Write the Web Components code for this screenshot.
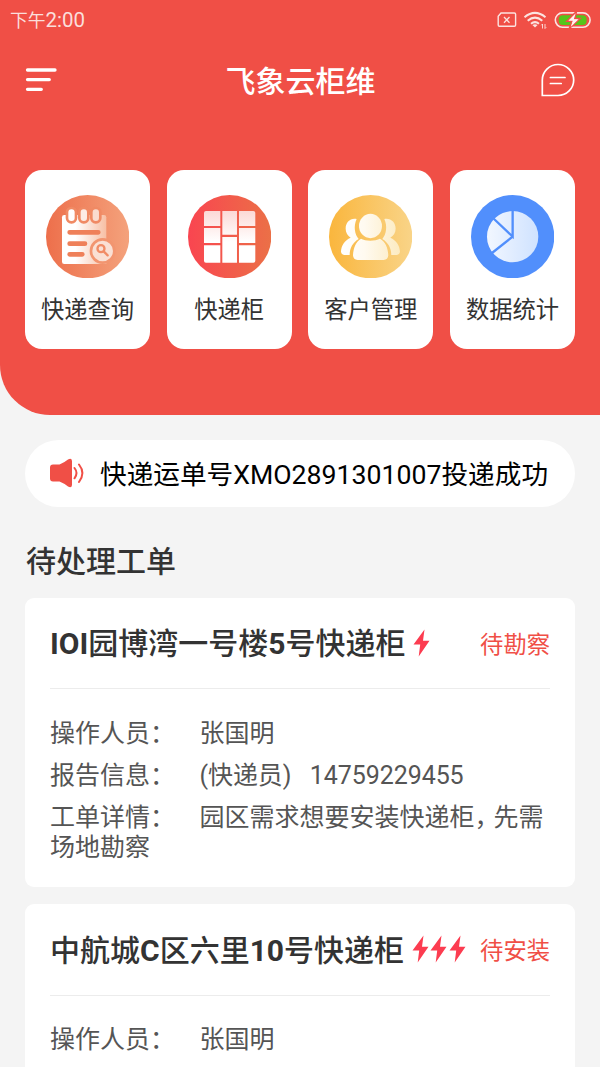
<!DOCTYPE html>
<html lang="zh-CN">
<head>
<meta charset="utf-8">
<title>飞象云柜维</title>
<style>
html,body{margin:0;height:1067px;overflow:hidden;background:#f4f4f4}
body{font-family:Roboto,"Noto Sans CJK SC",sans-serif;color:#333}
</style>
</head>
<body>
<locker-app></locker-app>
<script>
const define=(name,html)=>{
  const t=document.createElement('template');t.innerHTML=html;
  customElements.define(name,class extends HTMLElement{
    constructor(){super();this.attachShadow({mode:'open'}).append(t.content.cloneNode(true));}
  });
};

define('status-bar',`
<style>
:host{display:flex;height:40px;padding:0 9px 0 10px;justify-content:space-between;align-items:center;color:#fbdedb;box-sizing:border-box}
.t{font-size:20.500px;line-height:40px;padding-top:1px;white-space:nowrap}.t span{font-size:17.800px}
svg{display:block}
</style>
<div class="t"><span>下午</span>2:00</div>
<svg width="95" height="20" viewBox="0 0 95 20" fill="none" stroke="#fbe3e0" stroke-width="1.4">
<path d="M5 3H18.3Q19.6 3 19.6 4.300V15Q19.600 16.300 18.300 16.300H3.400Q2.200 16.300 2.200 15V6.300Z"/>
<path d="M8 7L13.500 12.700M13.500 7L8 12.700" stroke-width="1.300"/>
<g stroke-width="2"><path d="M28.500 7.200Q39 -1.400 49.500 7.200M31.700 10.700Q39 4.500 46.300 10.700M35 13.800Q39 10.500 43 13.800"/></g>
<path d="M36.400 15L39 17.600L41.600 15Q39 13.300 36.400 15Z" fill="#fbe3e0" stroke="none"/>
<path d="M46.500 18.500V14L45.300 15.300M49 14V18.500L50.200 17.300" stroke-width=".9"/>
<rect x="59.300" y="2.900" width="34.800" height="14.300" rx="7.150" stroke-width="1.600"/>
<rect x="62.800" y="5.200" width="27.800" height="9.800" rx="4" fill="#56c51b" stroke="none"/>
<path d="M80.200 2L71.200 11.200H76L73.500 18.200L83.800 8.700H78.600Z" fill="#fff2f0" stroke="#f04f46" stroke-width="1.800"/>
<path d="M79.700 3.200L72.300 10.700H76.800L74.700 17L82.600 9.200H77.800Z" fill="#fff2f0" stroke="none"/>
</svg>`);

define('nav-bar',`
<style>
:host{display:grid;grid-template-columns:100px 1fr 100px;align-items:center;height:80px;padding:0 25px;box-sizing:border-box}
h1{margin:0;padding:3px 0 0 1px;text-align:center;color:#fff;font-size:30px;font-weight:500;line-height:40px}
svg{display:block}.r{justify-self:end}
</style>
<svg width="33" height="26" viewBox="0 0 33 26" stroke="#fff" stroke-width="3.300" stroke-linecap="round"><path d="M2.500 3H30M2.500 12.600H24.300M2.500 22.300H16.300"/></svg>
<h1>飞象云柜维</h1>
<svg class="r" width="34" height="34" viewBox="0 0 34 34" fill="none" stroke="#fff" stroke-width="1.700" stroke-linecap="round"><path d="M17 32.500H1.300V17A15.700 15.500 0 1 1 17 32.500Z"/><path d="M9.400 14.500H24M9.400 20.500H20.200"/></svg>`);

define('menu-tile',`
<style>
:host{display:flex;flex-direction:column;align-items:center;height:178.500px;padding-top:25px;background:#fff;border-radius:17px;box-sizing:border-box}
::slotted(svg){display:block;width:83.300px;height:83.300px}
span{margin-top:14.700px;font-size:23.300px;line-height:34px;color:#333;white-space:nowrap}
</style>
<slot name="icon"></slot><span><slot></slot></span>`);

define('menu-grid',`
<style>
:host{display:grid;grid-template-columns:repeat(4,1fr);gap:16.670px;padding:50px 25px 0}
</style>
<menu-tile><svg slot="icon" viewBox="0 0 250 250">
<defs><linearGradient id="a"><stop stop-color="#ed6f4b"/><stop offset="1" stop-color="#f4a27c"/></linearGradient><linearGradient id="b"><stop stop-color="#fff"/><stop offset=".3" stop-color="#fff"/><stop offset="1" stop-color="#f7bfa4"/></linearGradient></defs>
<circle cx="125" cy="125" r="125" fill="url(#a)"/>
<path d="M55 60H174Q181 60 181 67V207H55Q48 207 48 200V67Q48 60 55 60Z" fill="url(#b)"/>
<g stroke="#f08a64" stroke-width="8"><rect x="63" y="39" width="27" height="43" rx="13" fill="#fff"/><rect x="100" y="39" width="27" height="43" rx="13" fill="#fdece5"/><rect x="136" y="39" width="27" height="43" rx="13" fill="#fadccf"/></g>
<path d="M71 112H157M71 146H117M71 178H109" stroke="#ef8059" stroke-width="14" stroke-linecap="round"/>
<circle cx="170" cy="168" r="35" fill="#fae0d4" stroke="#f29570" stroke-width="8"/>
<g fill="none" stroke="#f18c66" stroke-width="7" stroke-linecap="round"><circle cx="165" cy="161" r="10.500"/><path d="M173 169L185 181"/></g>
</svg>快递查询</menu-tile>
<menu-tile><svg slot="icon" viewBox="0 0 250 250">
<defs><linearGradient id="c"><stop stop-color="#f94550"/><stop offset="1" stop-color="#eb7047"/></linearGradient><linearGradient id="d" gradientUnits="userSpaceOnUse" x1="0" y1="48" x2="0" y2="203"><stop stop-color="#fcd9d6"/><stop offset=".6" stop-color="#fff"/></linearGradient></defs>
<circle cx="125" cy="125" r="125" fill="url(#c)"/>
<g fill="url(#d)"><path d="M54 48H97V93H48V54Q48 48 54 48ZM103 48H147V119H103ZM153 48H196Q202 48 202 54V93H153ZM48 99H97V144H48ZM153 99H202V144H153ZM48 151H97V203H54Q48 203 48 197ZM103 126H147V203H103ZM153 151H202V197Q202 203 196 203H153Z"/></g>
</svg>快递柜</menu-tile>
<menu-tile><svg slot="icon" viewBox="0 0 250 250">
<defs><linearGradient id="e"><stop stop-color="#fab63d"/><stop offset="1" stop-color="#f9d488"/></linearGradient><linearGradient id="f" gradientUnits="userSpaceOnUse" x1="36" y1="0" x2="213" y2="0"><stop stop-color="#fff"/><stop offset=".4" stop-color="#fffaf0"/><stop offset="1" stop-color="#fcebc1"/></linearGradient></defs>
<circle cx="125" cy="125" r="125" fill="url(#e)"/>
<g fill="url(#f)"><path d="M83 72C64 68 50 82 50 101C50 113 56 122 65 128C47 136 36 152 36 171Q37 178 45 180L62 180C62 159 72 142 89 132C77 118 73 93 83 72Z"/><path d="M166 72C185 68 200 82 200 101C200 113 194 122 184 128C202 136 213 152 213 171Q212 178 204 180L187 180C187 159 177 142 160 132C172 118 176 93 166 72Z"/>
<ellipse cx="124.500" cy="93" rx="34.500" ry="36.500"/><path d="M96 131C109 139 139 139 153 131C169 139 177 158 178 181Q177 195 164 195H86Q73 195 72 181C73 158 81 139 96 131Z"/></g>
</svg>客户管理</menu-tile>
<menu-tile><svg slot="icon" viewBox="0 0 250 250">
<defs><linearGradient id="g"><stop stop-color="#f2f7ff"/><stop offset="1" stop-color="#cfe2ff"/></linearGradient></defs>
<circle cx="125" cy="125" r="125" fill="#518ffc"/><circle cx="125" cy="125" r="77" fill="url(#g)"/>
<path d="M125 46V125L66 69M125 125L63 174" fill="none" stroke="#518ffc" stroke-width="7"/>
</svg>数据统计</menu-tile>`);

define('app-header',`
<style>
:host{display:block;height:415px;background:#f04f46;border-bottom-left-radius:50px}
</style>
<status-bar></status-bar><nav-bar></nav-bar><menu-grid></menu-grid>`);

define('notice-bar',`
<style>
:host{display:flex;align-items:center;height:66.700px;margin:25px 25px 0;padding:0 25px;border-radius:34px;background:#fff;box-sizing:border-box;color:#000;font-size:26.670px;white-space:nowrap}
svg{flex:none;margin-right:16px}
span{padding-bottom:2px}
</style>
<svg width="34" height="30" viewBox="0 0 34 30"><path d="M3 6.500H9.500Q14 4.800 18 1.500Q21.700 -.5 22 3V27Q21.700 30.500 18 28.500Q13.500 25 9.500 23.500H3Q0 23.500 0 20.500V9.500Q0 6.500 3 6.500Z" fill="#f04f46"/><path d="M24.500 10Q28.500 15 24.500 20.300M29 6.500Q35.800 15 29 24" fill="none" stroke="#f04f46" stroke-width="2" stroke-linecap="round"/></svg>
<span><slot></slot></span>`);

define('bolt-icon',`
<style>:host{display:block;width:18.330px;height:28px}svg{display:block}</style>
<svg width="17" height="28" viewBox="0 0 17 28"><path d="M11.500 .5L.5 15.500H7.200L5.700 27.500L16.500 11.800H10Z" fill="#fc3c50"/></svg>`);

define('order-row',`
<style>
:host{display:block;font-size:25px;line-height:29.300px;margin-bottom:13px;color:#555}
.l{display:inline-block;width:149.500px}
</style>
<span class="l"><slot name="label"></slot></span><slot></slot>`);

define('order-card',`
<style>
:host{display:block;margin:0 25px 16.700px;padding:0 25px 12.500px;border-radius:9px;background:#fff;box-sizing:border-box}
header{display:flex;align-items:center;height:90.500px;border-bottom:1px solid #ececec;white-space:nowrap}
h3{margin:0 8px 0 0;padding-top:3px;font-size:30px;font-weight:500;line-height:44px;color:#333}
.bolts{display:flex;flex:1}
.s{font-size:23.300px;color:#f04f46}
.rows{padding-top:29.500px}
</style>
<header><h3><slot name="title"></slot></h3><div class="bolts"><slot name="level"></slot></div><span class="s"><slot name="state"></slot></span></header>
<div class="rows"><slot></slot></div>`);

define('locker-app',`
<style>
:host{display:block;width:600px;height:1067px;overflow:hidden}
h2{margin:32.500px 25px 12.500px 26px;font-size:30px;font-weight:500;line-height:46px;color:#333}
b{font-weight:700}
pre{display:inline;margin:0;font:inherit;letter-spacing:-.07px}
.c{letter-spacing:-6px}
</style>
<app-header></app-header>
<notice-bar>快递运单号XMO2891301007投递成功</notice-bar>
<h2>待处理工单</h2>
<order-card>
<span slot="title"><b>IOI</b>园博湾一号楼<b>5</b>号快递柜</span>
<bolt-icon slot="level"></bolt-icon>
<span slot="state">待勘察</span>
<order-row><span slot="label">操作人员：</span>张国明</order-row>
<order-row><span slot="label">报告信息：</span><pre>(快递员)   14759229455</pre></order-row>
<order-row><span slot="label">工单详情：</span>园区需求想要安装快递柜<span class="c">，</span><span>先需</span><span>场地勘察</span></order-row>
</order-card>
<order-card>
<span slot="title">中航城<b>C</b>区六里<b>10</b>号快递柜</span>
<bolt-icon slot="level"></bolt-icon><bolt-icon slot="level"></bolt-icon><bolt-icon slot="level"></bolt-icon>
<span slot="state">待安装</span>
<order-row><span slot="label">操作人员：</span>张国明</order-row>
</order-card>`);
</script>
</body>
</html>
